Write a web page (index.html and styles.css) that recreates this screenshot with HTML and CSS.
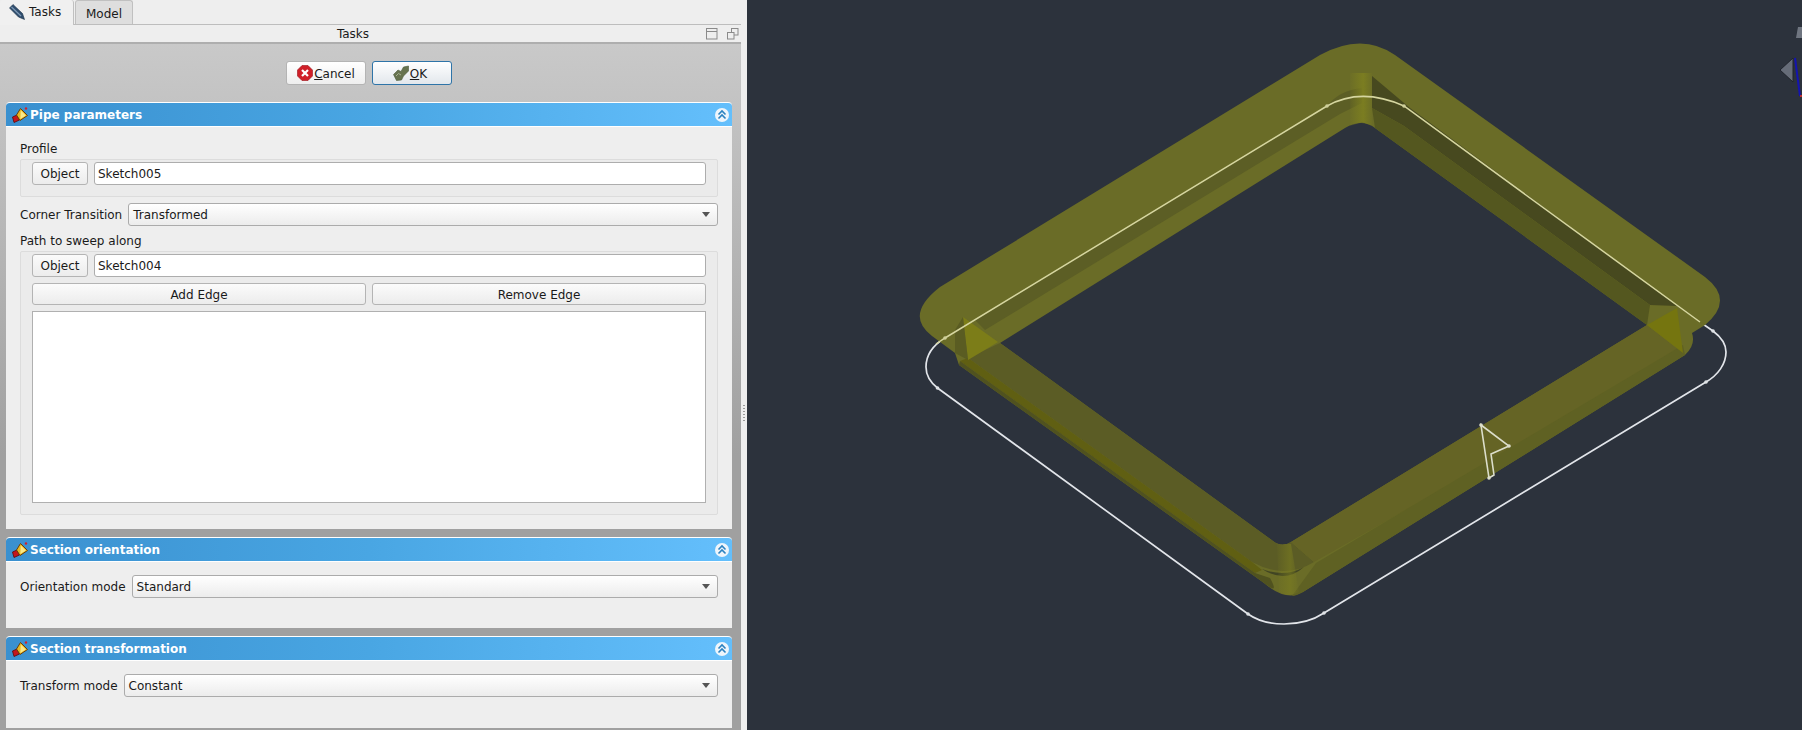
FILE: index.html
```html
<!doctype html>
<html>
  <head>
    <title>Pipe parameters</title>
    <link rel="stylesheet" href="styles.css">
  </head>

  <body>
    <svg class="defs" width="0" height="0">
      <symbol id="pipe" viewBox="0 0 16 16">
        <path d="M0.5 10 L5 8 L7.5 13 L2 15.5Z" fill="#c4161c" stroke="#5a0a0a" stroke-width="0.8" />
        <path d="M4.5 8 L8.5 1.5 L15.5 8.5 L8 13.5Z" fill="#e9b820" stroke="#6b3d08" stroke-width="1" />
        <path d="M8.8 3.5 L13.8 8.5 L8.3 12Z" fill="#fbe98a" />
        <circle cx="14" cy="1.5" r="1.2" fill="#d3202a" />
      </symbol>
      <symbol id="collapse" viewBox="0 0 14 14">
        <circle cx="7" cy="7" r="7" fill="#eef5fb" />
        <path d="M3.5 6.5 L7 3 L10.5 6.5 M3.5 10.5 L7 7 L10.5 10.5" fill="none" stroke="#2b82c0" stroke-width="1.6" />
      </symbol>
    </svg>

    <div class="sidebar">
      <div class="tabbar">
        <div class="tab tab_active">
          <svg class="tab_icon" width="16" height="16" viewBox="0 0 16 16">
            <path d="M0.5 4 L4 0.5 L13.5 9.5 L15.5 15.5 L9.5 13Z" fill="#2f4d6e" stroke="#1d3248" stroke-width="0.6" />
            <path d="M2.5 3 L12 12" stroke="#7f9ab5" stroke-width="1.2" />
          </svg>
          Tasks
        </div>
        <div class="tab tab_other">Model</div>
      </div>

      <div class="dock_title">
        <span class="dock_name">Tasks</span>
        <svg class="dock_icon" width="12" height="12" viewBox="0 0 12 12">
          <rect x="0.5" y="0.5" width="10.5" height="10.5" fill="none" stroke="#8a8a8a" />
          <path d="M0.5 3.5 H11" stroke="#8a8a8a" />
        </svg>
        <svg class="dock_icon" width="12" height="12" viewBox="0 0 12 12">
          <rect x="4.5" y="0.5" width="6.5" height="6.5" fill="none" stroke="#8a8a8a" />
          <rect x="0.5" y="4.5" width="6.5" height="6.5" fill="#eeeeee" stroke="#8a8a8a" />
        </svg>
      </div>

      <div class="panel">
        <div class="actions">
          <button class="action">
            <svg width="16" height="16" viewBox="0 0 16 16">
              <path d="M5 0.5 H11 L15.5 5 V11 L11 15.5 H5 L0.5 11 V5Z" fill="#d01f28" stroke="#9c1219" stroke-width="0.6" />
              <path d="M5 5 L11 11 M11 5 L5 11" stroke="#fff" stroke-width="2.2" />
            </svg>
            <span class="action_text"><u>C</u>ancel</span>
          </button>
          <button class="action action_default">
            <svg width="16" height="16" viewBox="0 0 16 16">
              <path d="M0.5 9.5 L5 5 L8 6.5 L10.5 2 L15.5 1 L15.5 6 L10.5 11 L8.5 15 L3.5 15.5Z" fill="#67734f" stroke="#4c5a3a" stroke-width="0.6" />
              <path d="M3 11 L5.5 8.5 L8 10" fill="none" stroke="#a9b394" stroke-width="1" />
            </svg>
            <span class="action_text"><u>O</u>K</span>
          </button>
        </div>

        <section class="box">
          <div class="box_head">
            <svg width="16" height="16"><use href="#pipe" /></svg>
            <span class="box_title">Pipe parameters</span>
            <svg class="box_toggle" width="14" height="14"><use href="#collapse" /></svg>
          </div>
          <div class="box_body box_body_main">
            <div class="caption caption_first">Profile</div>
            <div class="group">
              <div class="row">
                <button class="btn btn_object">Object</button>
                <input class="edit" type="text" value="Sketch005" />
              </div>
            </div>
            <div class="field field_between">
              <span>Corner Transition</span>
              <div class="combo"><span>Transformed</span><i class="arrow"></i></div>
            </div>
            <div class="caption">Path to sweep along</div>
            <div class="group">
              <div class="row">
                <button class="btn btn_object">Object</button>
                <input class="edit" type="text" value="Sketch004" />
              </div>
              <div class="row row_edges">
                <button class="btn btn_wide">Add Edge</button>
                <button class="btn btn_wide">Remove Edge</button>
              </div>
              <div class="edge_list"></div>
            </div>
          </div>
        </section>

        <section class="box">
          <div class="box_head">
            <svg width="16" height="16"><use href="#pipe" /></svg>
            <span class="box_title">Section orientation</span>
            <svg class="box_toggle" width="14" height="14"><use href="#collapse" /></svg>
          </div>
          <div class="box_body">
            <div class="field">
              <span>Orientation mode</span>
              <div class="combo"><span>Standard</span><i class="arrow"></i></div>
            </div>
          </div>
        </section>

        <section class="box">
          <div class="box_head">
            <svg width="16" height="16"><use href="#pipe" /></svg>
            <span class="box_title">Section transformation</span>
            <svg class="box_toggle" width="14" height="14"><use href="#collapse" /></svg>
          </div>
          <div class="box_body box_body_last">
            <div class="field">
              <span>Transform mode</span>
              <div class="combo"><span>Constant</span><i class="arrow"></i></div>
            </div>
          </div>
        </section>
      </div>
    </div>

    <div class="splitter"><div class="grip"></div></div>

    <div class="viewport">
      <svg width="1055" height="730" viewBox="747 0 1055 730">
        <defs>
          <linearGradient id="column" x1="0" x2="1" y1="0" y2="0">
            <stop offset="0" stop-color="#7d7f20" stop-opacity="0.1" />
            <stop offset="0.6" stop-color="#7d7f20" stop-opacity="0.9" />
            <stop offset="1" stop-color="#7d7f20" stop-opacity="0.1" />
          </linearGradient>
        </defs>

        <!-- sketch outline, the white part -->
        <path d="M945 338 C930 347 926 357 926 367 C926 376 930 382 937.5 388 L1248 614 C1258 621 1270 624 1284 624 C1298 624 1312 621 1324 613 L1706 382 C1718 375 1726 364 1726 352 C1726 343 1721 337 1713 331 L1700 322" fill="none" stroke="#e2e5ea" stroke-width="1.7" />

        <!-- sweep body -->
        <path fill-rule="evenodd" fill="#6a6c27" d="M1320 55 Q1362 32 1395 55 L1705 277 Q1735 300 1705 325 L1692 333 Q1696 345 1685 355 L1303 592 Q1286 602 1264 583 L959 365 L955 353 L932 336 Q904 315 940 287Z M1345 128 Q1362 118 1375 128 L1647 325 L1291 542 Q1282 548 1273 541 L1000 343Z" />

        <!-- left band, stripe under the outline -->
        <path fill="#5c5e25" d="M1362 88 Q1340 90 1327 106 L975 320 L985 330 L1340 114 L1362 103Z" />
        <!-- right band, channel and stripe -->
        <path fill="#47491f" d="M1372 76 L1410 108 L1677 306 L1650 305 L1404 126 L1372 108Z" />
        <path fill="#54571f" d="M1372 108 L1404 126 L1650 305 L1647 325 L1375 128Z" />
        <path fill="url(#column)" d="M1350 73 H1372 V126 L1362 122 L1350 126Z" />

        <!-- lower left band -->
        <path fill="#5b5c25" d="M1000 343 L1273 541 Q1282 548 1291 542 L1314 562 Q1285 580 1252 562 L968 358Z" />
        <path fill="#605f12" d="M968 358 L1252 562 L1262 570 L1255 573 L960 361Z" />
        <path fill="#50521f" d="M960 361 L1255 573 L1270 578 Q1280 596 1264 583 L959 365Z" />
        <path fill="#262b22" opacity="0.6" d="M1262 569 Q1285 578 1304 567 Q1285 584 1262 569Z" />

        <!-- lower right band -->
        <path fill="#656425" d="M1291 542 L1647 325 L1683 353 L1314 562Z" />
        <path fill="#5f6123" d="M1316 563 L1683 345 L1685 355 L1303 592 Q1296 596 1292 596Z" />
        <path fill="url(#column)" d="M1277 544 H1291 L1299 592 Q1288 598 1279 592Z" opacity="0.6" />

        <!-- corners -->
        <path fill="#7c7d18" d="M963 317 L998 342 L968 360Z" />
        <path fill="#75750f" d="M1677 308 L1647 325 L1683 353Z" />
        <path fill="#5a5c22" d="M955 330 L963 317 L968 360 L955 353Z" />

        <!-- sketch outline where it runs behind the body -->
        <path d="M936 344 L945 338 L1327 106 C1350 93 1375 93 1404 106 L1700 322" fill="none" stroke="#d6d6a0" stroke-width="1.5" />
        <g fill="#dfe2e6">
          <circle cx="937.5" cy="388" r="1.8" />
          <circle cx="1248" cy="614" r="1.8" />
          <circle cx="1324" cy="613" r="1.8" />
          <circle cx="1706" cy="382" r="1.8" />
          <circle cx="1713" cy="331" r="1.8" />
        </g>
        <g fill="#cfcf9a">
          <circle cx="945" cy="338" r="1.8" />
          <circle cx="1327" cy="106" r="1.8" />
          <circle cx="1404" cy="106" r="1.8" />
        </g>

        <!-- flag of the profile sketch -->
        <path d="M1481 425 L1509 446 L1491 454 L1494 475 L1489 478Z" fill="none" stroke="#dcdecb" stroke-width="1.6" />
        <g fill="#dcdecb">
          <circle cx="1481" cy="425" r="1.8" />
          <circle cx="1509" cy="446" r="1.8" />
          <circle cx="1489" cy="478" r="1.8" />
        </g>

        <!-- navigation cube, what shows of it -->
        <path d="M1780 70 L1793 58 V82Z" fill="#666c78" stroke="#20242c" />
        <path d="M1798 27 H1802 V38 H1796Z" fill="#6f7580" />
        <path d="M1795 58 L1800 96" stroke="#1414b0" stroke-width="2" />
        <rect x="1800" y="95" width="2" height="2" fill="#c03030" />
      </svg>
    </div>
  </body>
</html>
```

FILE: styles.css
```css
html,
body {
  margin: 0;
  height: 100%;
  overflow: hidden;
}

body {
  display: flex;
  background-color: #eeeeee;
  font-family: "DejaVu Sans", sans-serif;
  font-size: 12px;
  color: #1a1a1a;
}

.defs {
  position: absolute;
}

button,
input {
  font: inherit;
  color: inherit;
}

.sidebar {
  width: 741px;
  height: 730px;
  flex: none;
  display: flex;
  flex-direction: column;
}

.tabbar {
  display: flex;
  height: 24px;
  border-bottom: 1px solid #bdbdbd;
  flex: none;
}

.tab {
  display: flex;
  align-items: center;
  justify-content: center;
  width: 58px;
  height: 24px;
  margin-left: 1px;
  background-color: #dedede;
  border: 1px solid #c0c0c0;
  border-bottom: none;
  border-radius: 3px 3px 0 0;
  box-sizing: border-box;
}

.tab_other {
  padding-top: 2px;
}

.tab_active {
  width: 74px;
  height: 25px;
  margin-left: 0;
  justify-content: flex-start;
  gap: 4px;
  padding: 0 0 1px 9px;
  background-color: #f0f0f0;
  border: none;
  border-right: 1px solid #c0c0c0;
}

.dock_title {
  display: flex;
  align-items: center;
  height: 17px;
  border-bottom: 2px solid #aeaeae;
  flex: none;
}

.dock_name {
  width: 706px;
  flex: none;
  padding-top: 1px;
  text-align: center;
}

.dock_icon {
  flex: none;
  margin-right: 9px;
}

.panel {
  flex: 1;
  display: flex;
  flex-direction: column;
  gap: 8px;
  padding: 0 9px 0 6px;
  box-sizing: border-box;
  background: linear-gradient(180deg, #c9c9c9 0%, #a0a0a0 60%, #a0a0a0 100%);
}

.actions {
  display: flex;
  justify-content: center;
  gap: 6px;
  height: 58px;
  margin-bottom: -8px;
  padding: 17px 0 0 0;
  box-sizing: border-box;
}

.action {
  display: flex;
  align-items: center;
  justify-content: center;
  gap: 1px;
  width: 80px;
  height: 24px;
  padding: 0;
  background: linear-gradient(180deg, #ffffff 0%, #eeeeee 100%);
  border: 1px solid #b4b4b4;
  border-radius: 3px;
}

.action_text {
  padding-top: 1px;
}

.action_default {
  padding-right: 4px;
  background: linear-gradient(180deg, #ffffff 0%, #e2e7ec 100%);
  border-color: #2e74a8;
}

.box {
  display: flex;
  flex-direction: column;
}

.box_head {
  display: flex;
  align-items: center;
  gap: 2px;
  height: 25px;
  padding: 0 3px 0 6px;
  box-sizing: border-box;
  background: linear-gradient(90deg, #3a90cf 0%, #49a6e3 50%, #64bffc 100%);
  border: 1px solid #ffffff;
  border-left: none;
  border-right: none;
  border-radius: 4px 4px 0 0;
}

.box_title {
  flex: 1;
  font-weight: bold;
  color: #ffffff;
}

.box_body {
  height: 66px;
  padding: 13px 14px 0;
  box-sizing: border-box;
  background-color: #eeeeee;
}

.box_body_main {
  height: 402px;
  padding-top: 14px;
}

.box_body_last {
  height: 67px;
}

.caption {
  height: 15px;
  line-height: 17px;
  margin: 7px 0 3px;
}

.caption_first {
  margin: 0 0 3px;
}

.group {
  display: flex;
  flex-direction: column;
  gap: 6px;
  padding: 2px 11px 11px 11px;
  background-color: #ebebeb;
  border: 1px solid #dcdcdc;
  border-radius: 2px;
}

.row {
  display: flex;
  gap: 6px;
}

.btn {
  height: 23px;
  padding: 1px 0 0;
  background: linear-gradient(180deg, #fbfbfb 0%, #ececec 100%);
  border: 1px solid #b4b4b4;
  border-radius: 3px;
  box-sizing: border-box;
}

.btn_object {
  width: 56px;
  flex: none;
}

.btn_wide {
  flex: 1;
  height: 22px;
}

.edit {
  flex: 1;
  min-width: 0;
  height: 23px;
  padding: 1px 3px 0;
  background-color: #ffffff;
  border: 1px solid #adadad;
  border-radius: 3px;
  box-sizing: border-box;
  outline: none;
}

.edge_list {
  height: 192px;
  background-color: #ffffff;
  border: 1px solid #b0b0b0;
  box-sizing: border-box;
}

.field {
  display: flex;
  align-items: center;
  gap: 6px;
}

.field_between {
  margin-top: 6px;
}

.combo {
  flex: 1;
  display: flex;
  align-items: center;
  justify-content: space-between;
  height: 23px;
  padding: 0 7px 0 4px;
  background: linear-gradient(180deg, #ffffff 0%, #ececec 100%);
  border: 1px solid #ababab;
  border-radius: 3px;
  box-sizing: border-box;
}

.arrow {
  width: 0;
  height: 0;
  border-left: 4px solid transparent;
  border-right: 4px solid transparent;
  border-top: 5px solid #555555;
}

.splitter {
  width: 6px;
  flex: none;
  display: flex;
  align-items: center;
  justify-content: center;
  padding-top: 96px;
  box-sizing: border-box;
}

.grip {
  width: 2px;
  height: 17px;
  background: repeating-linear-gradient(180deg, #9a9a9a 0, #9a9a9a 1px, transparent 1px, transparent 3px);
}

.viewport {
  flex: 1;
  height: 730px;
  background-color: #2c323c;
}

.viewport svg {
  display: block;
}
```
